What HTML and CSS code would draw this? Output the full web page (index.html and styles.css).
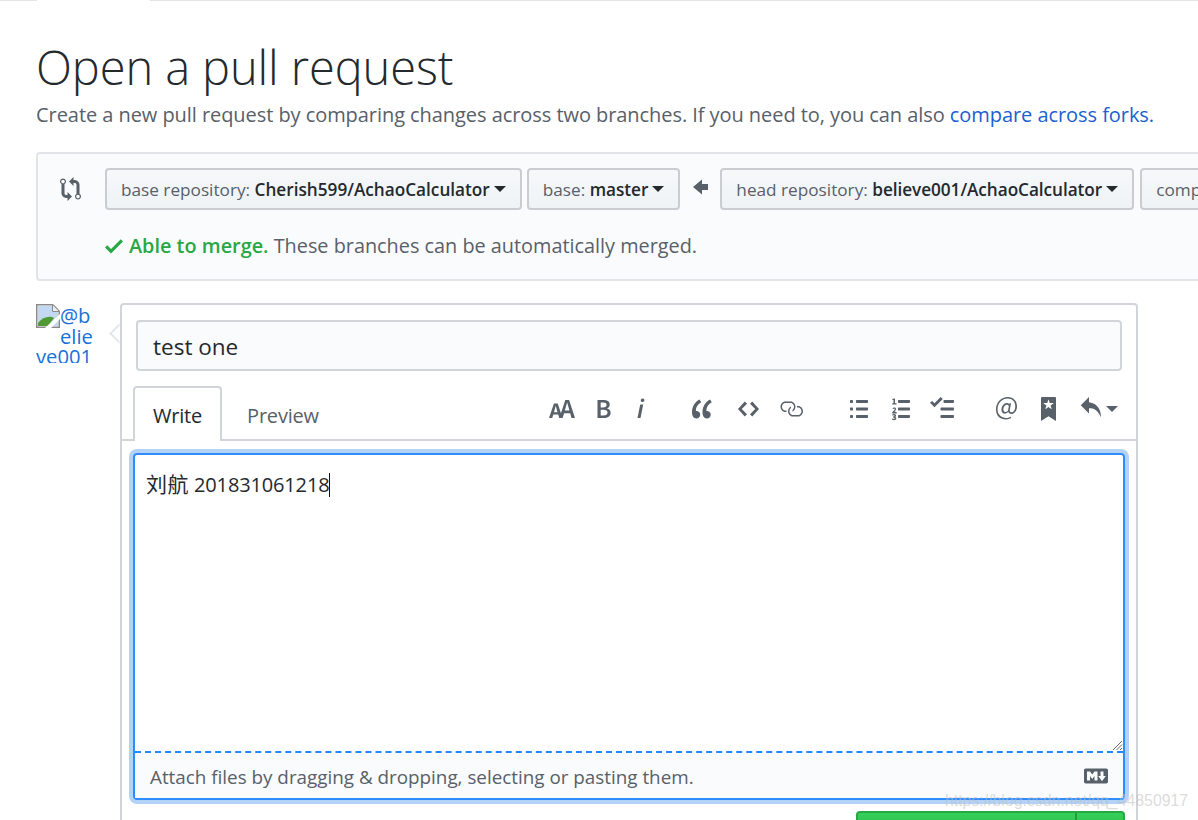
FILE: index.html
```html
<!DOCTYPE html>
<html lang="en">
<head>
<meta charset="utf-8">
<title>Open a pull request</title>
<link rel="stylesheet" href="styles.css">
</head>
<body>
<div class="top-strip"><div class="top-tab"></div></div>
<main class="page">
  <h1 class="title">Open a pull request</h1>
  <p class="subtitle">Create a new pull request by comparing changes across two branches. If you need to, you can also <a href="#">compare across forks.</a></p>

  <section class="compare">
    <div class="range">
      <svg class="ic ic-compare" viewBox="0 0 14 16"><path d="M5 12H4c-.27-.02-.48-.11-.69-.31-.21-.2-.3-.42-.31-.69V4.72A1.993 1.993 0 0 0 2 1a1.993 1.993 0 0 0-1 3.72V11c.03.78.34 1.47.94 2.06.6.59 1.28.91 2.06.94h1v2l3-3-3-3v2zM2 1.8c.66 0 1.2.55 1.2 1.2 0 .65-.55 1.2-1.2 1.2C1.35 4.2.8 3.65.8 3c0-.65.55-1.2 1.2-1.2zm11 9.48V5c-.03-.78-.34-1.47-.94-2.06-.6-.59-1.28-.91-2.06-.94H9V0L6 3l3 3V4h1c.27.02.48.11.69.31.21.2.3.42.31.69v6.28A1.993 1.993 0 0 0 12 15a1.993 1.993 0 0 0 1-3.72zM12 14.2c-.66 0-1.2-.55-1.2-1.2 0-.65.55-1.2 1.2-1.2.65 0 1.2.55 1.2 1.2 0 .65-.55 1.2-1.2 1.2z"/></svg>
      <button class="branch" type="button"><span>base repository: <b>Cherish599/AchaoCalculator</b></span><i class="caret"></i></button>
      <button class="branch branch-base" type="button"><span>base: <b>master</b></span><i class="caret"></i></button>
      <svg class="ic ic-arrow" viewBox="0 0 10 16"><path d="M6 3L0 8l6 5v-3h4V6H6V3z"/></svg>
      <button class="branch branch-head" type="button"><span>head repository: <b>believe001/AchaoCalculator</b></span><i class="caret"></i></button>
      <button class="branch" type="button"><span>compare: <b>master</b></span><i class="caret"></i></button>
    </div>
    <div class="merge">
      <svg class="ic ic-check" viewBox="0 0 12 16"><path d="M12 5l-8 8-4-4 1.5-1.5L4 10l6.5-6.5L12 5z"/></svg>
      <span><strong>Able to merge.</strong> These branches can be automatically merged.</span>
    </div>
  </section>

  <div class="discussion">
    <a class="avatar" href="#">
      <svg class="broken" viewBox="0 0 24 36"><g>
        <path d="M.75.75h16l6.500 6.500v16H.75z" fill="#fff" stroke="#8a8a8a" stroke-width="1.500"/>
        <path d="M2 2h14v6h6v14H2z" fill="#c3d9f3"/>
        <path d="M2 22v-3c4-5 9-7 14-6l2 1-6 8z" fill="#4f9a32"/>
        <path d="M9 24L24 10v5L15 24z" fill="#fff"/>
        <path d="M16.500 1v6.500H23" fill="#eee" stroke="#8a8a8a"/>
      </g></svg>@believe001
    </a>
    <form class="box">
      <i class="box-arrow"></i>
      <div class="title-row"><div class="title-input">test one</div></div>
      <div class="tabs">
        <span class="tab active">Write</span>
        <span class="tab">Preview</span>
        <div class="toolbar">
          <div class="tgroup tg-format">
            <svg class="ic t18" viewBox="0 0 18 16"><path d="M13.62 9.08L12.1 3.66h-.06l-1.5 5.42h3.08zM5.7 10.13S4.68 6.52 4.53 6.02h-.08l-1.13 4.11H5.7zM17.31 14h-2.25l-.95-3.25h-4.07L9.09 14H6.84l-.69-2.33H2.87L2.17 14H0l3.3-9.59h2.5l2.17 6.34L10.86 2h2.52l3.94 12h-.01z"/></svg>
            <svg class="ic t10" viewBox="0 0 10 16"><path d="M1 2h3.830c2.480 0 4.300.75 4.300 2.950 0 1.140-.63 2.230-1.670 2.610v.06c1.330.3 2.300 1.230 2.300 2.860 0 2.390-1.970 3.520-4.610 3.520H1V2zm3.660 4.950c1.670 0 2.380-.66 2.380-1.690 0-1.170-.78-1.610-2.340-1.610H3.130v3.300h1.530zm.27 5.390c1.770 0 2.750-.64 2.750-1.980 0-1.270-.95-1.810-2.750-1.810H3.130v3.800h1.800v-.01z"/></svg>
            <svg class="ic t6" viewBox="0 0 6 16"><path d="M2.810 5h1.980L3 14H1l1.810-9zm.36-2.700c0-.7.58-1.300 1.330-1.300.56 0 1.130.38 1.130 1.030 0 .75-.59 1.300-1.330 1.300-.58 0-1.130-.38-1.130-1.030z"/></svg>
          </div>
          <div class="tgroup tg-block">
            <svg class="ic t14" viewBox="0 0 14 16"><path d="M6.160 3.500C3.730 5.060 2.550 6.670 2.550 9.360c.16-.05.3-.05.44-.05 1.270 0 2.500.86 2.500 2.410 0 1.610-1.030 2.610-2.500 2.610-1.900 0-2.990-1.520-2.990-4.250 0-3.800 1.750-6.530 5.020-8.420L6.160 3.500zm7 0c-2.430 1.560-3.610 3.170-3.610 5.860.16-.05.3-.05.44-.05 1.270 0 2.500.86 2.500 2.410 0 1.610-1.030 2.610-2.500 2.610-1.890 0-2.980-1.520-2.980-4.250 0-3.800 1.750-6.530 5.020-8.420l1.140 1.840h-.01z"/></svg>
            <svg class="ic t14" viewBox="0 0 14 16"><path d="M9.500 3L8 4.500 11.500 8 8 11.500 9.500 13 14 8 9.500 3zm-5 0L0 8l4.500 5L6 11.500 2.500 8 6 4.500 4.500 3z"/></svg>
            <svg class="ic t16 t-link" viewBox="0 0 16 16"><path d="M4 9h1v1H4c-1.500 0-3-1.690-3-3.500S2.550 3 4 3h4c1.450 0 3 1.690 3 3.500 0 1.410-.91 2.720-2 3.250V8.590c.58-.45 1-1.270 1-2.090C10 5.220 8.980 4 8 4H4c-.98 0-2 1.220-2 2.500S3 9 4 9zm9-3h-1v1h1c1 0 2 1.220 2 2.500S13.980 12 13 12H9c-.98 0-2-1.220-2-2.500 0-.83.42-1.640 1-2.090V6.250c-1.090.53-2 1.840-2 3.250C6 11.310 7.550 13 9 13h4c1.450 0 3-1.690 3-3.500S14.500 6 13 6z"/></svg>
          </div>
          <div class="tgroup tg-list">
            <svg class="ic t12" viewBox="0 0 12 16"><path d="M2 13c0 .59 0 1-.59 1H.59C0 14 0 13.590 0 13c0-.59 0-1 .59-1h.81c.59 0 .59.41.59 1H2zm2.590-9h6.810c.59 0 .59-.41.59-1 0-.59 0-1-.59-1H4.590C4 2 4 2.410 4 3c0 .59 0 1 .59 1zM1.410 7H.59C0 7 0 7.410 0 8c0 .59 0 1 .59 1h.81c.59 0 .59-.41.59-1 0-.59 0-1-.59-1h.01zm0-5H.59C0 2 0 2.410 0 3c0 .59 0 1 .59 1h.81c.59 0 .59-.41.59-1 0-.59 0-1-.59-1h.01zm10 5H4.590C4 7 4 7.410 4 8c0 .59 0 1 .59 1h6.810c.59 0 .59-.41.59-1 0-.59 0-1-.59-1h.01zm0 5H4.590C4 12 4 12.410 4 13c0 .59 0 1 .59 1h6.810c.59 0 .59-.41.59-1 0-.59 0-1-.59-1h.01z"/></svg>
            <svg class="ic t12" viewBox="0 0 12 16"><path d="M12.010 13c0 .59 0 1-.59 1H4.600c-.59 0-.59-.41-.59-1 0-.59 0-1 .59-1h6.810c.59 0 .59.41.59 1h.01zM4.600 4h6.810C12 4 12 3.590 12 3c0-.59 0-1-.59-1H4.600c-.59 0-.59.41-.59 1 0 .59 0 1 .59 1zm6.810 3H4.600c-.59 0-.59.41-.59 1 0 .59 0 1 .59 1h6.810C12 9 12 8.590 12 8c0-.59 0-1-.59-1zM2 1h-.72c-.3.19-.58.25-1.030.34V2H1v2.140H.17V5H3v-.86H2V1zm.250 8.880c-.19 0-.5.03-.72.06.53-.56 1.140-1.250 1.140-1.890C2.670 7.280 2.130 7 1.470 7 .97 7 .61 7.170.27 7.530l.47.47c.2-.2.4-.39.66-.39.28 0 .47.16.47.44 0 .53-.8 1.270-1.700 2.130V11h3v-.86l-.92-.26zm-.17 3.470v-.03c.44-.19.64-.47.64-.86 0-.7-.56-1.110-1.440-1.110-.48 0-.89.19-1.280.52l.55.64c.25-.2.44-.31.69-.31.27 0 .42.13.42.36 0 .27-.2.44-.86.44v.75c.83 0 .98.17.98.47 0 .25-.23.38-.58.38-.28 0-.56-.14-.81-.38l-.48.66c.3.36.77.56 1.410.56.83 0 1.530-.41 1.530-1.160 0-.5-.31-.81-.77-.94z"/></svg>
            <svg class="ic t16 t-task" viewBox="0 0 16 16"><path d="M15.410 9H7.590C7 9 7 8.590 7 8c0-.59 0-1 .59-1h7.810c.59 0 .59.41.59 1 0 .59 0 1-.59 1h.01zM9.590 4C9 4 9 3.590 9 3c0-.59 0-1 .59-1h5.810c.59 0 .59.41.59 1 0 .59 0 1-.59 1H9.590zM0 3.910l1.410-1.300L3 4.200 7.090 0 8.500 1.410 3 6.910l-3-3zM7.590 12h7.810c.59 0 .59.41.59 1 0 .59 0 1-.59 1H7.590C7 14 7 13.590 7 13c0-.59 0-1 .59-1z"/></svg>
          </div>
          <div class="tgroup tg-last">
            <svg class="ic t14" viewBox="0 0 14 16"><path d="M6.580 15c1.250 0 2.520-.31 3.560-.94l-.42-.94c-.84.52-1.890.83-3.030.83-3.230 0-5.640-2.080-5.640-5.720 0-4.370 3.230-7.180 6.580-7.180 3.450 0 5.220 2.190 5.220 5.200 0 2.390-1.340 3.860-2.500 3.860-1.050 0-1.360-.73-1.050-2.190l.73-3.750H8.980l-.11.72c-.41-.63-.94-.83-1.560-.83-2.190 0-3.660 2.390-3.660 4.380 0 1.670.94 2.610 2.300 2.610.84 0 1.670-.53 2.300-1.250.11.94.94 1.450 1.980 1.450 1.670 0 3.770-1.670 3.770-5C14 2.610 11.590 0 7.830 0 3.660 0 0 3.330 0 8.330 0 12.710 2.920 15 6.580 15zm-.31-5c-.73 0-1.360-.52-1.360-1.670 0-1.450.94-3.220 2.410-3.220.52 0 .84.2 1.250.83l-.52 3.020c-.63.73-1.250 1.050-1.780 1.050V10z"/></svg>
            <svg class="ic t10" viewBox="0 0 10 16"><path d="M9 0H1C.27 0 0 .27 0 1v15l5-3.090L10 16V1c0-.73-.27-1-1-1zm-.78 4.250L6.360 5.610l.72 2.160c.06.22-.02.28-.2.17L5 6.600 3.120 7.940c-.19.11-.25.05-.2-.17l.72-2.160-1.860-1.360c-.17-.16-.14-.23.09-.23l2.300-.03.7-2.160h.25l.7 2.160 2.300.03c.23 0 .27.08.09.23h.01z"/></svg>
            <span class="reply">
              <svg class="ic t14" viewBox="0 0 14 16"><path d="M6 3.500c3.920.44 8 3.125 8 10-2.312-5.062-4.750-6-8-6V11L.5 5.500 6 0v3.500z"/></svg>
              <i class="caret caret-muted"></i>
            </span>
          </div>
        </div>
      </div>
      <div class="editor">
        <div class="write"><span class="cjk">刘航</span> 201831061218<span class="text-cursor"></span>
          <svg class="grip" viewBox="0 0 11 11"><path d="M1 10L10 1M4.500 10L10 4.500M8 10l2-2" stroke="#666" fill="none"/></svg>
        </div>
        <div class="drop">
          <span>Attach files by dragging &amp; dropping, selecting or pasting them.</span>
          <svg class="ic ic-md" viewBox="0 0 16 16"><path d="M14.850 3H1.150C.52 3 0 3.520 0 4.150v7.690C0 12.480.52 13 1.150 13h13.690c.64 0 1.150-.52 1.150-1.150v-7.700C16 3.520 15.480 3 14.850 3zM9 11H7V8L5.500 9.920 4 8v3H2V5h2l1.500 2L7 5h2v6zm2.990.5L9.500 8H11V5h2v3h1.500l-2.510 3.500z"/></svg>
        </div>
      </div>
      <div class="actions">
        <div class="green-btn"><span class="green-main"></span><span class="green-drop"></span></div>
      </div>
    </form>
  </div>
</main>
<div class="watermark">https://blog.csdn.net/qq_44850917</div>
</body>
</html>
```
FILE: styles.css
```css
html, body { margin: 0; padding: 0; height: 820px; overflow: hidden; background: #fff; }
body { font-family: "Open Sans", "Noto Sans CJK SC", sans-serif; color: #24292e; position: relative; }
.top-strip { height: 1px; background: #e1e4e8; }
.top-tab { width: 113px; height: 1px; margin-left: 37px; background: #fff; }
.page { padding-left: 36px; width: 1400px; }
.title { margin: 36px 0 0; font-size: 47px; font-weight: 300; line-height: 60px; letter-spacing: -.1px; color: #24292e; }
.subtitle { margin: 3px 0 0; font-size: 20px; line-height: 30px; color: #586069; white-space: nowrap; letter-spacing: -.06px; }
.subtitle a { color: #1a5fd0; text-decoration: none; }

.compare { width: 1300px; height: 129px; box-sizing: border-box; margin-top: 22px; background: #fafbfc; border: 2px solid #e1e4e8; border-radius: 4px; padding: 14px 0 0 21px; }
.ic { fill: #586069; display: block; flex: none; }
.range { display: flex; align-items: center; }
.ic-compare { width: 21px; height: 24px; margin-right: 24px; margin-left: 1px; }
.ic-arrow { width: 15px; height: 24px; margin: -4px 12px 0 8px; }
.branch { height: 42px; box-sizing: border-box; font: inherit; font-size: 17.2px; color: #586069; border: 2px solid #c9cdd2; border-radius: 4px; background: linear-gradient(#f6f8fa, #eff3f6); padding: 0 14px; white-space: nowrap; display: flex; align-items: center; gap: 4px; margin-right: 5px; flex: none; }
.branch b { color: #24292e; font-weight: 600; }
.branch-base b { letter-spacing: -.03px; }
.branch-head { margin-right: 6px; }
.branch-head b { letter-spacing: -.05px; }
.caret { display: block; width: 0; height: 0; border: 6px solid transparent; border-top-color: #24292e; border-bottom-width: 0; flex: none; }
.merge { margin: 22px 0 0 46px; font-size: 19.85px; line-height: 28px; color: #586069; display: flex; align-items: center; gap: 6px; white-space: nowrap; }
.merge strong { color: #28a745; font-weight: 600; }
.ic-check { fill: #28a745; width: 18px; height: 24px; }

.discussion { display: flex; margin-top: 22px; }
.avatar { width: 57px; height: 59px; box-sizing: border-box; margin-top: 1px; padding-top: 1px; overflow: hidden; flex: none; font-size: 20.2px; line-height: 20.5px; color: #1a6fd8; text-decoration: none; word-break: break-all; }
.broken { float: left; width: 24px; height: 36px; margin-top: -1px; }
.box { position: relative; width: 1018px; height: 600px; box-sizing: border-box; margin-left: 27px; border: 2px solid #d1d5da; border-radius: 4px; padding: 15px 14px 0; flex: none; background: #fff; }
.box-arrow { position: absolute; left: -10px; top: 21px; width: 15px; height: 15px; background: #fff; border-left: 2px solid #e1e4e8; border-bottom: 2px solid #e1e4e8; transform: rotate(45deg); box-sizing: border-box; clip-path: polygon(0 0, 100% 100%, 0 100%); }
.title-input { height: 51px; box-sizing: border-box; border: 2px solid #d1d5da; border-radius: 4px; background: #fafbfc; padding: 0 15px; font-size: 22.5px; line-height: 49px; }
.title-row { margin-bottom: 15px; }
.tabs { display: flex; align-items: flex-end; height: 55px; box-sizing: border-box; margin: 0 -14px; padding-left: 11px; border-bottom: 2px solid #d1d5da; }
.tab { height: 53px; box-sizing: border-box; padding: 0 18px; font-size: 20px; line-height: 56px; color: #586069; letter-spacing: -.2px; margin-bottom: -2px; }
.tab.active { color: #24292e; height: 55px; border: 2px solid #d1d5da; border-bottom: 0; border-radius: 4px 4px 0 0; background: #fff; padding: 0 18px; line-height: 56px; margin-right: 7px; }
.toolbar { margin-left: auto; align-self: flex-start; padding: 11px 18px 0 0; display: flex; gap: 47px; }
.tgroup { display: flex; }
.tgroup .ic { height: 24px; }
.tg-format { gap: 20px; }
.tg-block { gap: 25px; }
.tg-list { gap: 24px; }
.tg-last { gap: 24px; margin-left: -5px; }
.t18 { width: 27px; }
.t16 { width: 24px; }
.t14 { width: 21px; }
.t12 { width: 18px; }
.t10 { width: 15px; }
.t6 { width: 9px; margin-left: 5px; }
.t-link { margin-left: -5px; }
.t-task { margin-left: -4px; }
.reply { display: flex; align-items: center; gap: 5px; }
.caret-muted { border-top-color: #586069; border-width: 6px 6px 0; }

.editor { height: 347px; box-sizing: border-box; margin: 12px -3px 0; border: 2px solid #2f8cff; border-radius: 4px; box-shadow: 0 0 0 4px #b2d2f7; display: flex; flex-direction: column; }
.write { position: relative; height: 298px; box-sizing: border-box; border-bottom: 2px dashed #2188ff; padding: 14px 11px 0; font-size: 20px; line-height: 30px; color: #24292e; letter-spacing: -.15px; }
.cjk { font-size: 21px; letter-spacing: .5px; }
.text-cursor { display: inline-block; width: 1px; height: 24px; background: #111; vertical-align: -5px; }
.grip { position: absolute; right: 0; bottom: 0; width: 11px; height: 11px; }
.drop { flex: 1; display: flex; align-items: center; justify-content: space-between; padding: 2px 15px 0; background: #fafbfc; font-size: 18.83px; color: #586069; }
.ic-md { width: 24px; height: 24px; fill: #586069; margin-top: -2px; }
.actions { display: flex; justify-content: flex-end; padding-top: 11px; margin-right: -3px; }
.green-btn { display: flex; width: 269px; height: 40px; box-sizing: border-box; border: 2px solid #28a745; border-radius: 4px; background: linear-gradient(#34d058, #28a745); }
.green-main { flex: none; width: 217px; border-right: 2px solid #249a3f; }
.green-drop { flex: 1; }
.watermark { position: absolute; left: 945px; top: 791px; font-family: "Liberation Sans", sans-serif; font-size: 15.85px; line-height: 20px; color: rgba(190,190,190,.55); white-space: nowrap; }
```
